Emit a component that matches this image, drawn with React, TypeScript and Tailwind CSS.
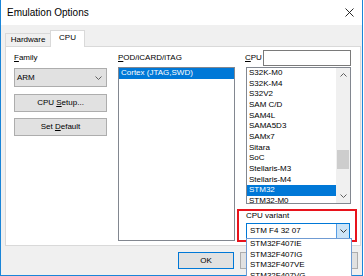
import React from "react";

/* ── Data ──────────────────────────────────────────────────────────────── */

const CPUS = [
  "S32K-M0",
  "S32K-M4",
  "S32V2",
  "SAM C/D",
  "SAM4L",
  "SAMA5D3",
  "SAMx7",
  "Sitara",
  "SoC",
  "Stellaris-M3",
  "Stellaris-M4",
  "STM32",
  "STM32-M0",
];

const VARIANTS = ["STM32F407IE", "STM32F407IG", "STM32F407VE", "STM32F407VG"];

/* ── Small pieces ──────────────────────────────────────────────────────── */

function Chevron({ up = false, color = "#606060" }: { up?: boolean; color?: string }) {
  return (
    <svg width="7" height="4" viewBox="0 0 7 4" className="block">
      <path d={up ? "M0.5 3.5 L3.5 0.5 L6.5 3.5" : "M0.5 0.5 L3.5 3.5 L6.5 0.5"} stroke={color} strokeWidth="1" fill="none" />
    </svg>
  );
}

function Btn({ children, primary = false, className = "" }: { children?: React.ReactNode; primary?: boolean; className?: string }) {
  return (
    <div
      className={`flex items-center justify-center bg-[#e1e1e1] border ${primary ? "border-[#0078d7]" : "border-[#adadad]"} ${className}`}
    >
      {children}
    </div>
  );
}

/* ── Page ──────────────────────────────────────────────────────────────── */

export default function App() {
  return (
    <div className="w-[364px] h-[276px] overflow-hidden bg-white text-[8px] text-black font-['Liberation_Sans',Arial,sans-serif]">
      <div className="w-[363px] h-[276px] border-x border-b border-[#1a85d8] bg-[#f0f0f0] flex flex-col">
        {/* title bar */}
        <div className="h-[25px] shrink-0 bg-white flex items-center justify-between pl-[6px] pr-[8px]">
          <span className="text-[10px]">Emulation Options</span>
          <svg width="9" height="9" viewBox="0 0 9 9" className="block">
            <path d="M0.5 0.5 L8.5 8.5 M8.5 0.5 L0.5 8.5" stroke="#111" strokeWidth="0.9" />
          </svg>
        </div>

        {/* body */}
        <div className="flex-1 pl-[4px] pr-[1px] pt-[5px] flex flex-col">
          {/* tabs */}
          <div className="h-[16px] flex items-end">
            <div className="h-[13px] w-[46px] border border-b-0 border-[#d9d9d9] bg-[#f0f0f0] flex items-center justify-center">
              Hardware
            </div>
            <div className="relative z-10 -ml-px -mb-px h-[17px] w-[35px] border border-b-0 border-[#d9d9d9] bg-white flex items-center justify-center pb-[2px]">
              CPU
            </div>
          </div>

          {/* tab panel */}
          <div className="h-[200px] border border-[#d9d9d9] bg-white pl-[8px] pt-[3px] flex">
            {/* family column */}
            <div className="w-[93px] flex flex-col">
              <div className="mt-[3px] h-[10px] leading-[10px]">
                <u className="underline-offset-[1px]">F</u>amily
              </div>
              <div className="mt-[5px] h-[19px] bg-[#e1e1e1] border border-[#adadad] flex items-center justify-between pl-[2px] pr-[4px]">
                <span>ARM</span>
                <Chevron />
              </div>
              <Btn className="mt-[7px] h-[18px]">
                <span>
                  CPU <u className="underline-offset-[1px]">S</u>etup...
                </span>
              </Btn>
              <Btn className="mt-[6px] h-[18px]">
                <span>
                  Set <u className="underline-offset-[1px]">D</u>efault
                </span>
              </Btn>
            </div>

            {/* pod column */}
            <div className="ml-[11px] w-[117px] flex flex-col">
              <div className="mt-[3px] h-[10px] leading-[10px]">
                <u className="underline-offset-[1px]">P</u>OD/iCARD/iTAG
              </div>
              <div className="mt-[4px] h-[174px] border border-[#828790] bg-white">
                <div className="h-[10.67px] leading-[10.67px] bg-[#0078d7] text-white pl-[2px]">Cortex (JTAG,SWD)</div>
              </div>
            </div>

            {/* cpu column */}
            <div className="ml-[2px] w-[120px] flex flex-col">
              <div className="h-[16px] flex items-center pl-[8px] pr-[6px]">
                <span>
                  <u className="underline-offset-[1px]">C</u>PU
                </span>
                <div className="ml-auto w-[88px] h-[16px] border border-[#7a7a7a] bg-white" />
              </div>

              <div className="mt-[1px] ml-[9px] w-[105px] h-[137px] border border-[#828790] bg-white flex overflow-hidden">
                <div className="flex-1 flex flex-col">
                  {CPUS.map((c) => (
                    <div
                      key={c}
                      className={`h-[10.67px] shrink-0 leading-[10.67px] pl-[2px] whitespace-nowrap ${c === "STM32" ? "bg-[#0078d7] text-white" : ""}`}
                    >
                      {c}
                    </div>
                  ))}
                </div>
                <div className="w-[14px] bg-[#f0f0f0] flex flex-col items-center">
                  <div className="h-[14px] flex items-center justify-center">
                    <Chevron up />
                  </div>
                  <div className="mt-[68px] w-[12px] h-[19px] bg-[#cdcdcd]" />
                  <div className="mt-auto h-[14px] flex items-center justify-center">
                    <Chevron />
                  </div>
                </div>
              </div>

              {/* highlighted cpu variant */}
              <div className="mt-[5px] h-[33px] border-2 border-[#e8131c] pl-[7px] flex flex-col">
                <div className="h-[10px] leading-[10px]">CPU variant</div>
                <div className="relative mt-[2px] w-[104px] h-[16px] border border-[#0078d7] bg-white flex items-center">
                  <span className="pl-[3px] flex-1">STM F4 32 07</span>
                  <div className="w-[13px] h-full bg-[#cce4f7] border-l border-[#569de5] flex items-center justify-center">
                    <Chevron color="#3a3a3a" />
                  </div>
                  {/* open dropdown list */}
                  <div className="absolute left-[-1px] top-full w-[106px] h-[44px] border border-[#6f9bd3] bg-white z-20">
                    {VARIANTS.map((v) => (
                      <div key={v} className="h-[10.5px] leading-[10.5px] pl-[3px]">
                        {v}
                      </div>
                    ))}
                  </div>
                </div>
              </div>
            </div>
          </div>

          {/* dialog buttons (the last two sit under the open list) */}
          <div className="mt-[6px] flex justify-end gap-[6px] pr-[3px]">
            <Btn primary className="w-[56px] h-[17px]">
              OK
            </Btn>
            <Btn className="w-[56px] h-[17px]" />
            <Btn className="w-[56px] h-[17px]" />
          </div>
        </div>
      </div>
    </div>
  );
}
